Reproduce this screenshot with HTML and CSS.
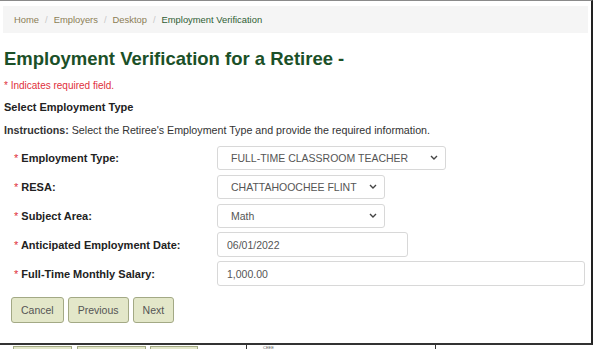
FILE: index.html
```html
<!DOCTYPE html>
<html lang="en">
<head>
    <meta charset="UTF-8">
    <title>Employment Verification</title>
    <link rel="stylesheet" href="styles.css">
</head>
<body>
    <!-- Ventana del formulario -->
    <div class="panel">
        <div class="breadcrumb">
            <a href="#">Home</a><span class="sep">/</span>
            <a href="#">Employers</a><span class="sep">/</span>
            <a href="#">Desktop</a><span class="sep">/</span>
            <span class="current">Employment Verification</span>
        </div>

        <h1>Employment Verification for a Retiree -</h1>
        <p class="required-note">* Indicates required field.</p>
        <h2>Select Employment Type</h2>
        <p class="instructions"><strong>Instructions:</strong> Select the Retiree's Employment Type and provide the required information.</p>

        <div class="form">
            <div class="row">
                <label><span class="star">*</span> Employment Type:</label>
                <div class="select w-type">
                    <span>FULL-TIME CLASSROOM TEACHER</span>
                    <svg width="8" height="5" viewBox="0 0 8 5"><path d="M1 1 L4 4 L7 1" fill="none" stroke="#444" stroke-width="1.4"/></svg>
                </div>
            </div>
            <div class="row">
                <label><span class="star">*</span> RESA:</label>
                <div class="select w-short">
                    <span>CHATTAHOOCHEE FLINT</span>
                    <svg width="8" height="5" viewBox="0 0 8 5"><path d="M1 1 L4 4 L7 1" fill="none" stroke="#444" stroke-width="1.4"/></svg>
                </div>
            </div>
            <div class="row">
                <label><span class="star">*</span> Subject Area:</label>
                <div class="select w-short">
                    <span>Math</span>
                    <svg width="8" height="5" viewBox="0 0 8 5"><path d="M1 1 L4 4 L7 1" fill="none" stroke="#444" stroke-width="1.4"/></svg>
                </div>
            </div>
            <div class="row">
                <label><span class="star">*</span> Anticipated Employment Date:</label>
                <input class="w-date" type="text" value="06/01/2022">
            </div>
            <div class="row">
                <label><span class="star">*</span> Full-Time Monthly Salary:</label>
                <input class="w-full" type="text" value="1,000.00">
            </div>
        </div>

        <div class="buttons">
            <button>Cancel</button>
            <button>Previous</button>
            <button>Next</button>
        </div>
    </div>

    <!-- Tabla de fondo (parcialmente visible) -->
    <div class="backdrop">
        <span class="cell green c1"></span>
        <span class="cell green c2"></span>
        <span class="cell green c3"></span>
        <span class="cell line c4"></span>
        <span class="cell text c5">CEEE</span>
        <span class="cell line c6"></span>
    </div>
</body>
</html>
```

FILE: styles.css
```css
/* Estilos generales */
body {
    margin: 0;
    font-family: 'Liberation Sans', Arial, sans-serif;
    background-color: #fff;
    color: #222;
    overflow: hidden;
}

/* Ventana */
.panel {
    width: 591px;
    height: 342px;
    border-top: 1px solid #8a8a8a;
    border-right: 2px solid #222;
    border-bottom: 2px solid #333;
    box-sizing: content-box;
    overflow: hidden;
}

/* Migas de pan */
.breadcrumb {
    margin: 5px 3px 0 3px;
    height: 27px;
    background-color: #f5f5f5;
    display: flex;
    align-items: center;
    padding-left: 11px;
    font-size: 9.4px;
}

.breadcrumb a {
    color: #8c7e55;
    text-decoration: none;
}

.breadcrumb .sep {
    color: #c8c8c8;
    margin: 0 6px;
}

.breadcrumb .current {
    color: #2f5e34;
}

/* Título */
h1 {
    margin: 14px 0 0 4px;
    font-size: 18.5px;
    line-height: 24px;
    color: #1b5028;
}

.required-note {
    margin: 8px 0 0 4px;
    font-size: 10px;
    line-height: 13px;
    color: #e0303c;
}

h2 {
    margin: 8px 0 0 4px;
    font-size: 11px;
    line-height: 14px;
    color: #222;
}

.instructions {
    margin: 9px 0 0 4px;
    font-size: 10.7px;
    line-height: 14px;
    color: #333;
}

/* Formulario */
.form {
    margin-top: 8px;
    display: flex;
    flex-direction: column;
    gap: 4px;
}

.row {
    display: grid;
    grid-template-columns: 217px auto;
    align-items: center;
    height: 25px;
}

.row label {
    padding-left: 14px;
    font-size: 11px;
    font-weight: bold;
    color: #222;
}

.star {
    color: #e0303c;
    font-weight: normal;
}

.select,
.row input {
    height: 24px;
    box-sizing: border-box;
    border: 1px solid #d8d8d8;
    border-radius: 3px;
    background-color: #fff;
    font-family: 'Liberation Sans', Arial, sans-serif;
    font-size: 10.5px;
    color: #555;
}

.select {
    display: flex;
    align-items: center;
    justify-content: space-between;
    padding: 0 7px 0 13px;
}

.row input {
    padding: 0 9px;
    height: 25px;
    outline: none;
}

.w-type { width: 229px; }
.w-short { width: 168px; }
.w-date { width: 191px; }
.w-full { width: 368px; }

/* Botones */
.buttons {
    margin: 11px 0 0 11px;
    display: flex;
    gap: 4px;
}

.buttons button {
    height: 26px;
    padding: 0 9px;
    background-color: #e3e7c9;
    border: 1px solid #a3a985;
    border-radius: 3px;
    font-family: 'Liberation Sans', Arial, sans-serif;
    font-size: 10.5px;
    color: #555;
}

/* Fondo */
.backdrop {
    display: flex;
    height: 5px;
    align-items: stretch;
}

.cell {
    display: block;
}

.green {
    background-color: #e3e7c9;
    border: 1px solid #a3a985;
    border-bottom: none;
    margin-top: 1px;
}

.c1 { margin-left: 13px; width: 57px; }
.c2 { margin-left: 5px; width: 67px; }
.c3 { margin-left: 4px; width: 46px; }
.c4 { width: 1px; background: #333; margin-left: 48px; }
.c5 { font-size: 4px; line-height: 5px; color: #555; margin-left: 16px; width: 172px; }
.c6 { width: 1px; background: #333; }
```
